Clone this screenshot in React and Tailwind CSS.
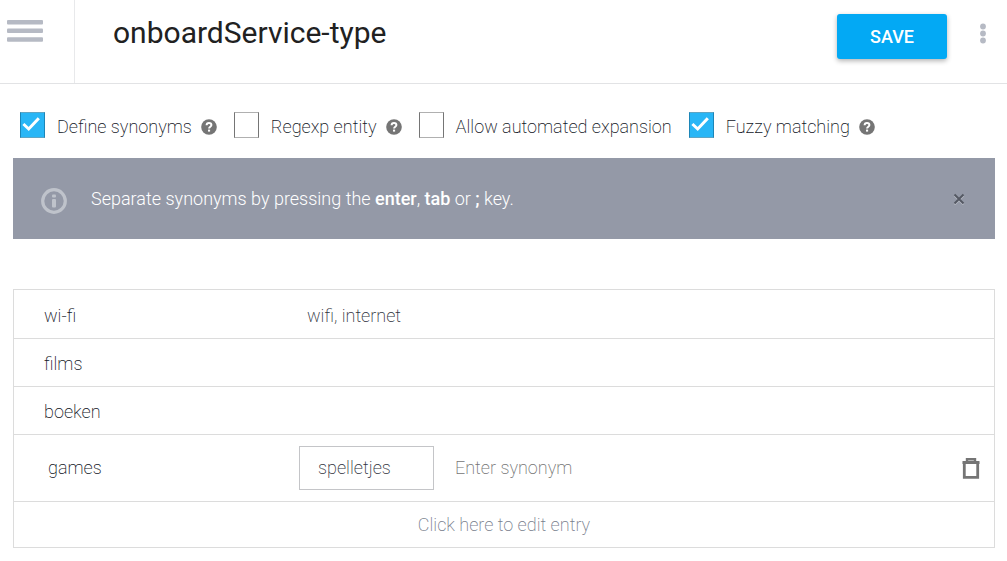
import { useState } from "react";

function HelpIcon() {
  return (
    <svg viewBox="0 0 16 16" className="block size-4" aria-hidden="true">
      <circle cx="8" cy="8" r="7.8" fill="#757575" />
      <path d="M5.6 6.3C5.6 4.8 6.6 3.9 8 3.9s2.4.9 2.4 2.1c0 1.7-2.3 1.7-2.3 3.5" fill="none" stroke="#fff" strokeWidth="2" />
      <rect x="7" y="10.6" width="2.1" height="2" fill="#fff" />
    </svg>
  );
}

function Option({ id, label, initial, help }) {
  const [checked, setChecked] = useState(initial);
  return (
    <div className="flex items-center gap-[9px]">
      <label htmlFor={id} className="flex items-center gap-3">
        <span className="relative block h-[26px] w-[25px]">
          <input
            id={id}
            type="checkbox"
            checked={checked}
            onChange={(e) => setChecked(e.target.checked)}
            className="block h-full w-full appearance-none border border-x-[#757575] border-y-[#b0b0b0] bg-white checked:border-x-[#1c86b8] checked:border-y-[#5fa5c4] checked:bg-[#29b6f6]"
          />
          {checked && (
            <svg viewBox="0 0 25 26" className="pointer-events-none absolute inset-0 size-full" aria-hidden="true">
              <path d="M3.4 12 8.7 17 18.8 6.2" fill="none" stroke="#fff" strokeWidth="3" />
            </svg>
          )}
        </span>
        <span className="pt-1">{label}</span>
      </label>
      {help && (
        <button type="button" aria-label={`Help: ${label}`} className="pt-[3px]">
          <HelpIcon />
        </button>
      )}
    </div>
  );
}

function EntryRow({ name, synonyms, height }) {
  return (
    <tr className={height}>
      <td className="border-b border-[#dcdcdc] pt-[3px] pl-[30px]">{name}</td>
      <td className="border-b border-[#dcdcdc] pt-[3px] pl-2 text-[#30333d]">{synonyms}</td>
    </tr>
  );
}

export default function App() {
  return (
    <div className="min-h-screen bg-white font-['Roboto',sans-serif] text-lg leading-6 font-extralight text-[#10141d]">
      <header className="flex h-[84px] border-b border-[#e2e3e5]">
        <div className="w-[75px] shrink-0 border-r border-[#e8e9eb] pt-[19px] pl-[7px]">
          <button type="button" aria-label="Menu" className="block">
            <svg viewBox="0 0 36 24" className="block h-6 w-9" fill="#b6bac4" aria-hidden="true">
              <rect y="1" width="36" height="4.4" rx="1" />
              <rect y="9.6" width="36" height="4.4" rx="1" />
              <rect y="18.3" width="36" height="4.4" rx="1" />
            </svg>
          </button>
        </div>
        <h1 className="grow pt-[13px] pl-[38px] text-3xl leading-10 font-normal text-[#212121]">onboardService-type</h1>
        <div className="flex items-start pt-3.5 pr-[21px]">
          <button type="button" className="h-[45px] w-[110px] rounded-[3px] bg-[#03a9f4] text-lg font-medium text-white shadow-[0_2px_5px_rgba(0,0,0,0.3)]">
            SAVE
          </button>
          <button type="button" aria-label="More options" className="pt-2 pl-[33px]">
            <svg viewBox="0 0 6 24" className="block h-6 w-1.5" fill="#b6bac4" aria-hidden="true">
              <circle cx="3" cy="4.5" r="2.9" />
              <circle cx="3" cy="11.5" r="2.9" />
              <circle cx="3" cy="18.5" r="2.9" />
            </svg>
          </button>
        </div>
      </header>

      <main className="px-3 pl-[13px]">
        <div className="flex flex-wrap items-center gap-x-[17px] gap-y-2 px-[7px] pt-[27px] pb-[19px]">
          <Option id="synonyms" label="Define synonyms" initial help />
          <Option id="regexp" label="Regexp entity" initial={false} help />
          <Option id="expansion" label="Allow automated expansion" initial={false} />
          <Option id="fuzzy" label="Fuzzy matching" initial help />
        </div>

        <section className="flex h-[81px] items-center bg-[#9499a7] pr-[30px] pl-7 text-white">
          <svg viewBox="0 0 26 26" className="mt-1 block size-[26px] shrink-0" aria-hidden="true">
            <circle cx="13" cy="13" r="11.3" fill="none" stroke="#bfc3cb" strokeWidth="3.2" />
            <rect x="11" y="6.5" width="4" height="3" rx="1" fill="#bfc3cb" />
            <rect x="11" y="11" width="4" height="8.5" rx="1" fill="#bfc3cb" />
          </svg>
          <p className="grow pl-6 font-light">
            Separate synonyms by pressing the <b className="font-medium">enter</b>, <b className="font-medium">tab</b> or{" "}
            <b className="font-medium">;</b> key.
          </p>
          <button type="button" aria-label="Dismiss">
            <svg viewBox="0 0 12 12" className="block size-3" fill="none" strokeWidth="2" aria-hidden="true">
              <path d="M1.5 2.5l9 9M10.5 2.5l-9 9" stroke="#b9bdc6" />
              <path d="M1.5 1.5l9 9M10.5 1.5l-9 9" stroke="#555964" />
            </svg>
          </button>
        </section>

        <table className="mt-[50px] w-full table-fixed border-separate border-spacing-0 border border-[#dcdcdc]">
          <colgroup>
            <col className="w-[285px]" />
            <col />
          </colgroup>
          <tbody>
            <EntryRow name="wi-fi" synonyms="wifi, internet" height="h-[49px]" />
            <EntryRow name="films" synonyms="" height="h-12" />
            <EntryRow name="boeken" synonyms="" height="h-12" />
            <tr className="h-[67px]">
              <td className="border-b border-[#dcdcdc] pl-[34px]">
                <input aria-label="Reference value" defaultValue="games" className="block w-full bg-transparent outline-none" />
              </td>
              <td className="border-b border-[#dcdcdc]">
                <div className="flex items-center pr-3.5">
                  <input
                    aria-label="Synonym"
                    defaultValue="spelletjes"
                    className="block h-11 w-[135px] border border-[#c4c5c8] bg-transparent px-[18px] pb-0.5 text-[#30333d] outline-none"
                  />
                  <input
                    aria-label="New synonym"
                    placeholder="Enter synonym"
                    className="block min-w-0 grow bg-transparent pl-[21px] outline-none placeholder:text-[#757575]"
                  />
                  <button type="button" aria-label="Delete entry">
                    <svg viewBox="0 0 18 22" className="block h-[22px] w-[18px]" fill="none" stroke="#757575" aria-hidden="true">
                      <path d="M0.5 5.5H17.5" strokeWidth="3" />
                      <path d="M5 5V2.2H13V5" strokeWidth="2.4" />
                      <path d="M2.3 5V20.4H15.7V5" strokeWidth="2.8" />
                    </svg>
                  </button>
                </div>
              </td>
            </tr>
            <tr className="h-[45px]">
              <td colSpan={2} className="text-center">
                <button type="button" className="w-full font-extralight text-[#777d8c]">
                  Click here to edit entry
                </button>
              </td>
            </tr>
          </tbody>
        </table>
      </main>
    </div>
  );
}
